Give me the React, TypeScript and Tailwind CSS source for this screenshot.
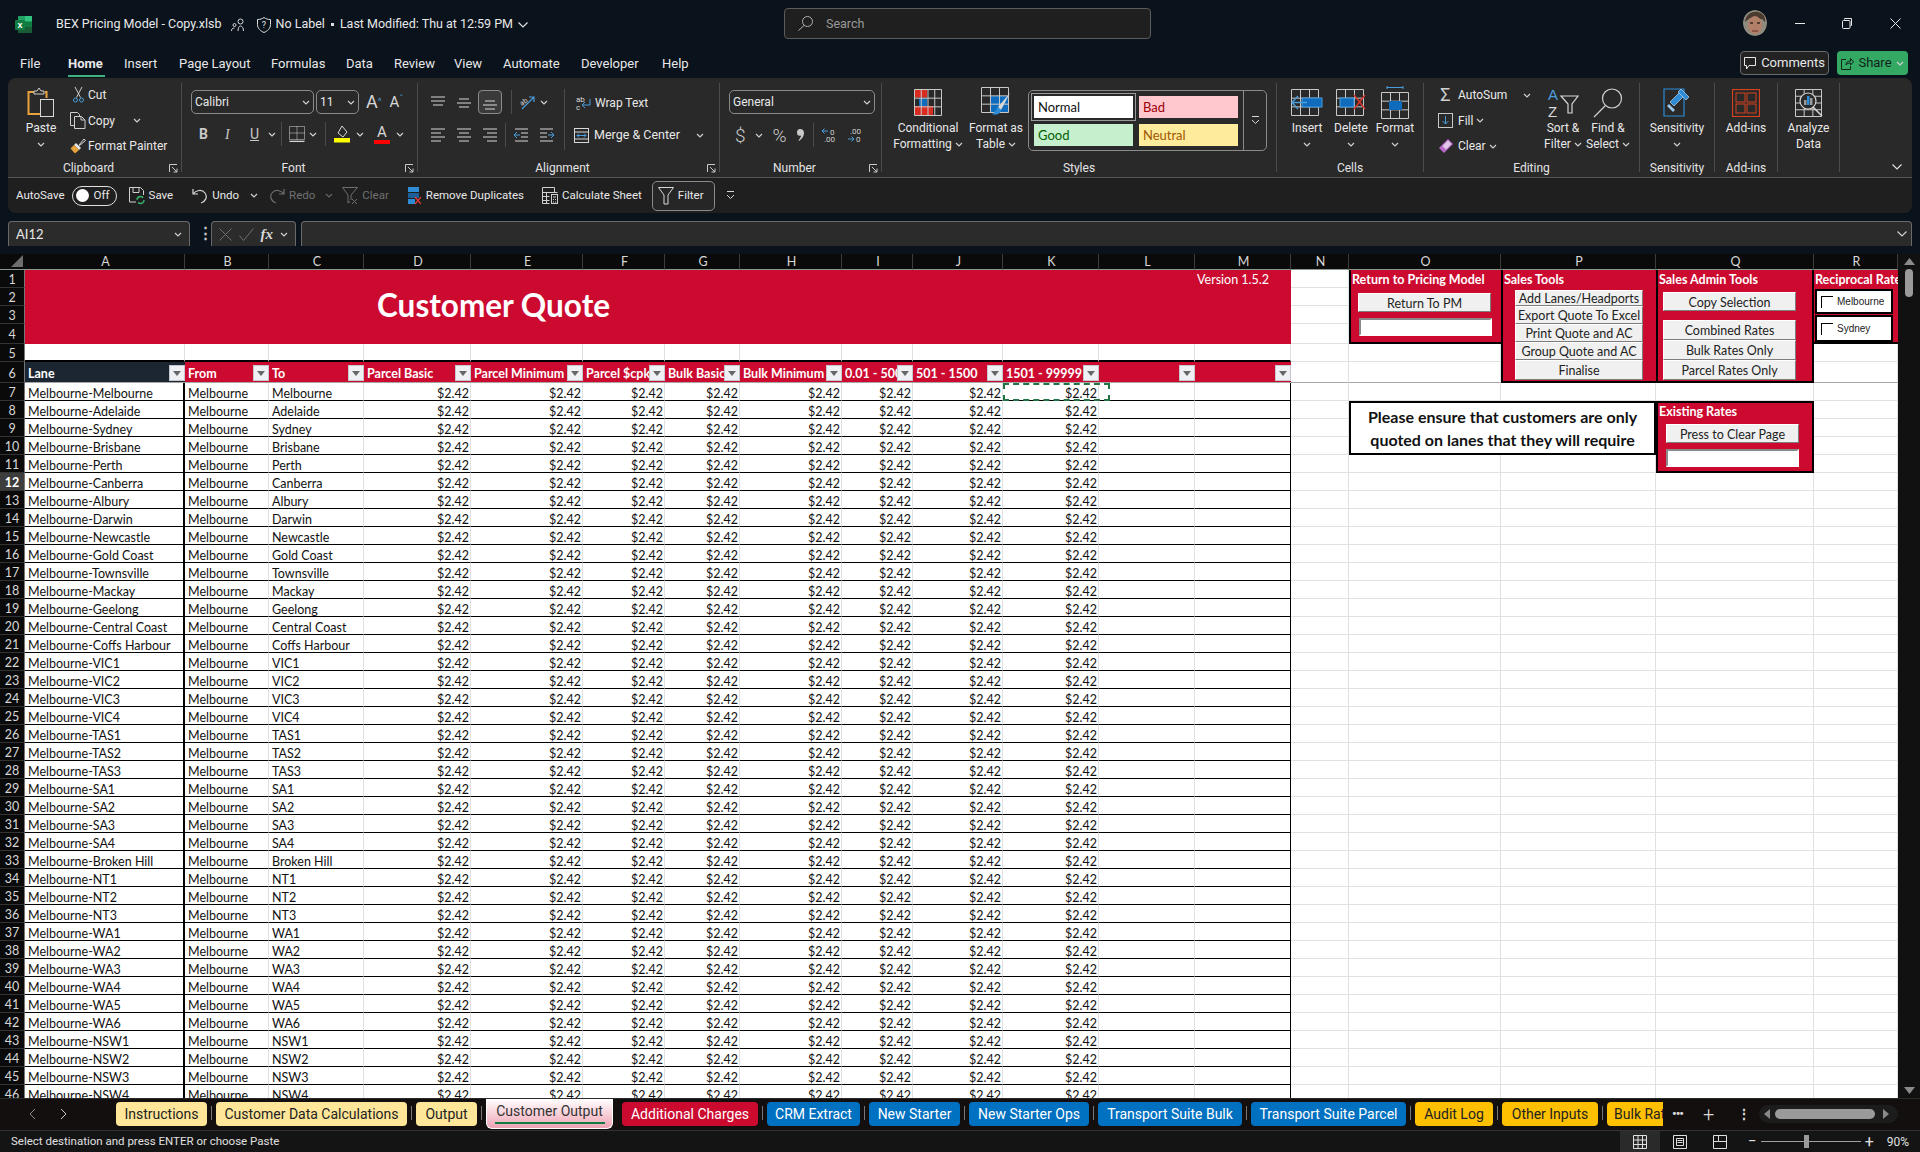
import type { ReactNode } from 'react';

const LANES = [
  'Melbourne', 'Adelaide', 'Sydney', 'Brisbane', 'Perth', 'Canberra', 'Albury', 'Darwin', 'Newcastle', 'Gold Coast',
  'Townsville', 'Mackay', 'Geelong', 'Central Coast', 'Coffs Harbour', 'VIC1', 'VIC2', 'VIC3', 'VIC4', 'TAS1', 'TAS2',
  'TAS3', 'SA1', 'SA2', 'SA3', 'SA4', 'Broken Hill', 'NT1', 'NT2', 'NT3', 'WA1', 'WA2', 'WA3', 'WA4', 'WA5', 'WA6',
  'NSW1', 'NSW2', 'NSW3', 'NSW4',
];
const COLS = 'ABCDEFGHIJKLMNOPQR'.split('');
const HEADERS = ['Lane', 'From', 'To', 'Parcel Basic', 'Parcel Minimum', 'Parcel $cpk', 'Bulk Basic', 'Bulk Minimum', '0.01 - 500', '501 - 1500', '1501 - 99999', '', ''];

// merged ranges on the sheet: [firstCol, lastCol, firstRow, lastRow], col 0 = A
const MERGED = [
  [0, 12, 1, 4],
  [14, 14, 1, 4],
  [15, 15, 1, 6],
  [16, 16, 1, 6],
  [17, 17, 1, 4],
  [14, 15, 8, 10],
  [16, 16, 8, 11],
];
const isMerged = (c: number, r: number) => MERGED.some(([c1, c2, r1, r2]) => c >= c1 && c <= c2 && r >= r1 && r <= r2);

const TABS = [
  { name: 'Instructions', cls: 'w-[91px] bg-[#ffe699] text-[#222]' },
  { name: 'Customer Data Calculations', cls: 'w-[191px] bg-[#ffe699] text-[#222]' },
  { name: 'Output', cls: 'w-[61px] bg-[#ffe699] text-[#222]' },
  { name: 'Customer Output', active: true, cls: 'w-[127px]' },
  { name: 'Additional Charges', cls: 'w-[136px] bg-[#cc0a30] text-white' },
  { name: 'CRM Extract', cls: 'w-[93px] bg-[#0070c0] text-white' },
  { name: 'New Starter', cls: 'w-[91px] bg-[#0070c0] text-white' },
  { name: 'New Starter Ops', cls: 'w-[120px] bg-[#0070c0] text-white' },
  { name: 'Transport Suite Bulk', cls: 'w-[144px] bg-[#0070c0] text-white' },
  { name: 'Transport Suite Parcel', cls: 'w-[155px] bg-[#0070c0] text-white' },
  { name: 'Audit Log', cls: 'w-[78px] bg-[#ffc000] text-[#222]' },
  { name: 'Other Inputs', cls: 'w-[96px] bg-[#ffc000] text-[#222]' },
  { name: 'Bulk Rates', cls: 'w-[80px] bg-[#ffc000] text-[#222]' },
];

function Chev({ className = '', dim = false }: { className?: string; dim?: boolean }) {
  return (
    <svg width="8" height="5" viewBox="0 0 8 5" className={`shrink-0 ${className}`}>
      <path d="M1 1l3 3 3-3" fill="none" stroke={dim ? '#666' : '#d0d0d0'} strokeWidth="1.2" />
    </svg>
  );
}

function Launcher() {
  return (
    <svg width="9" height="9" viewBox="0 0 9 9">
      <path d="M.5 8V.5H8M3 3l5 5M8 4.5V8H4.5" fill="none" stroke="#c8c8c8" strokeWidth="1" />
    </svg>
  );
}

function Lines({ rows }: { rows: number[][] }) {
  return (
    <svg width="16" height="16" viewBox="0 0 16 16">
      {rows.map(([x1, x2, y], i) => (
        <line key={i} x1={x1} x2={x2} y1={y} y2={y} stroke="#d8d8d8" strokeWidth="1" />
      ))}
    </svg>
  );
}

function MiniGrid({ w, h, nx, ny }: { w: number; h: number; nx: number; ny: number }) {
  const xs = Array.from({ length: nx + 1 }, (_, i) => 0.5 + (i * (w - 1)) / nx);
  const ys = Array.from({ length: ny + 1 }, (_, i) => 0.5 + (i * (h - 1)) / ny);
  return (
    <>
      {xs.map((x) => <line key={x} x1={x} x2={x} y1={0.5} y2={h - 0.5} stroke="#c8c8c8" />)}
      {ys.map((y) => <line key={y} x1={0.5} x2={w - 0.5} y1={y} y2={y} stroke="#c8c8c8" />)}
    </>
  );
}

function ExcelLogo() {
  return (
    <svg width="17" height="17" viewBox="0 0 17 17">
      <rect x="3" y="0" width="14" height="17" rx="1" fill="#21a366" />
      <rect x="10" y="0" width="7" height="5.5" fill="#33c481" />
      <rect x="3" y="11" width="14" height="6" fill="#185c37" />
      <rect x="10" y="5.5" width="7" height="5.5" fill="#107c41" />
      <rect x="0" y="4" width="10" height="10" rx="1" fill="#107c41" />
      <text x="5" y="12" textAnchor="middle" fontSize="9" fontWeight="700" fill="#fff" fontFamily="Liberation Sans">x</text>
    </svg>
  );
}

function PasteIcon() {
  return (
    <svg width="28" height="31" viewBox="0 0 28 31">
      <path d="M7 5H1.5v22H13" fill="none" stroke="#e9a33c" strokeWidth="2" />
      <path d="M18 5h1.500v6" fill="none" stroke="#e9a33c" strokeWidth="2" />
      <path d="M7 7V4h3l2-3 2 3h3v3z" fill="none" stroke="#cfcfcf" />
      <rect x="13.500" y="12.500" width="13" height="17" fill="#2a2a2a" stroke="#d8d8d8" />
    </svg>
  );
}

function ScissorsIcon() {
  return (
    <svg width="11" height="16" viewBox="0 0 11 16">
      <path d="M2 0l5.500 10.500M9 0L3.500 10.500" fill="none" stroke="#cfcfcf" />
      <circle cx="2.500" cy="13" r="2" fill="none" stroke="#4a9edb" />
      <circle cx="8.500" cy="13" r="2" fill="none" stroke="#4a9edb" />
    </svg>
  );
}

function CopyIcon() {
  return (
    <svg width="16" height="17" viewBox="0 0 16 17">
      <path d="M4 13.500H.5V.5h7l2 2V5M4.500 4.500h7l3.500 3.500v8.500H4.500z" fill="none" stroke="#cfcfcf" />
      <path d="M11 4.500V8h4" fill="none" stroke="#cfcfcf" />
    </svg>
  );
}

function BrushIcon() {
  return (
    <svg width="16" height="16" viewBox="0 0 16 16">
      <path d="M9 7l5-6 1.500 1.500-6 5z" fill="none" stroke="#d8d8d8" />
      <path d="M6 5l5 5-2 2-5-5z" fill="#e5e5e5" />
      <path d="M4 7l5 5-4 3.500-4.500-5z" fill="#e9a33c" />
    </svg>
  );
}

function ConditionalIcon() {
  return (
    <svg width="29" height="27" viewBox="0 0 29 27">
      <rect x="1" y="0.500" width="12" height="8" fill="#d92b20" />
      <rect x="5" y="9" width="8" height="8" fill="#0f6cbd" />
      <rect x="1" y="17" width="18" height="9" fill="#d92b20" />
      <MiniGrid w={28} h={27} nx={4} ny={3} />
    </svg>
  );
}

function TableIcon() {
  return (
    <svg width="30" height="31" viewBox="0 0 30 31">
      <rect x="10" y="9" width="18" height="16" fill="#0f6cbd" />
      <MiniGrid w={28} h={26} nx={3} ny={3} />
      <path d="M29 6L17 20l3 3z" fill="#d8d8d8" />
      <path d="M17 20c-2 1-2 5-6 7 5 2 9-1 9-4z" fill="#2e8bd6" />
    </svg>
  );
}

function InsertIcon() {
  return (
    <svg width="32" height="27" viewBox="0 0 32 27">
      <MiniGrid w={28} h={27} nx={3} ny={3} />
      <rect x="11" y="9" width="20" height="9" fill="#0f6cbd" stroke="#4a9edb" />
      <path d="M16 13.500H2M7 7l-6 6.500L7 20" fill="none" stroke="#4a9edb" strokeWidth="1.400" />
    </svg>
  );
}

function DeleteIcon() {
  return (
    <svg width="30" height="27" viewBox="0 0 30 27">
      <MiniGrid w={28} h={27} nx={3} ny={3} />
      <rect x="4" y="9" width="14" height="9" fill="#0f6cbd" stroke="#4a9edb" />
      <path d="M18 6l11 14M29 6L18 20" stroke="#d9352c" strokeWidth="1.500" />
    </svg>
  );
}

function FormatIcon() {
  return (
    <svg width="29" height="33" viewBox="0 0 29 33">
      <path d="M6 1.500h16M6 0v3M22 0v3" stroke="#4a9edb" />
      <g transform="translate(0 6)">
        <MiniGrid w={28} h={27} nx={3} ny={3} />
        <rect x="8" y="9" width="13" height="9" fill="#0f6cbd" />
      </g>
    </svg>
  );
}

function SortIcon() {
  return (
    <svg width="31" height="30" viewBox="0 0 31 30" className="overflow-visible">
      <text x="0" y="12" fontSize="15" fill="#4a9edb" fontFamily="Liberation Sans">A</text>
      <text x="0" y="29" fontSize="15" fill="#d8d8d8" fontFamily="Liberation Sans">Z</text>
      <path d="M13 8h17l-6 8v9h-4v-9z" fill="none" stroke="#d8d8d8" strokeWidth="1.200" />
    </svg>
  );
}

function FindIcon() {
  return (
    <svg width="30" height="30" viewBox="0 0 30 30">
      <circle cx="19" cy="10.500" r="9.500" fill="none" stroke="#d0d0d0" strokeWidth="1.200" />
      <path d="M12 18L1 29" stroke="#d0d0d0" strokeWidth="1.200" />
    </svg>
  );
}

function SensitivityIcon() {
  return (
    <svg width="28" height="29" viewBox="0 0 28 29">
      <path d="M1 1h20v27H1z" fill="none" stroke="#2e8bd6" strokeWidth="1.200" />
      <path d="M7 14L18 3l4 4L11 18z" fill="#2e8bd6" stroke="#d8e8f5" strokeWidth=".6" />
      <path d="M18 1l8 8-3 3-8-8z" fill="#2e8bd6" stroke="#d8e8f5" strokeWidth=".6" />
      <path d="M6 16l6 6-2 2-6-6z" fill="#9cc7e8" />
    </svg>
  );
}

function AddinsIcon() {
  return (
    <svg width="28" height="28" viewBox="0 0 28 28" fill="none" stroke="#d8431f">
      <rect x="0.500" y="0.500" width="27" height="27" strokeWidth="1.200" />
      <rect x="4" y="4" width="9" height="9" />
      <rect x="15" y="4" width="9" height="9" />
      <rect x="4" y="15" width="9" height="9" />
      <rect x="15" y="15" width="9" height="9" />
    </svg>
  );
}

function AnalyzeIcon() {
  return (
    <svg width="28" height="28" viewBox="0 0 28 28">
      <MiniGrid w={27} h={28} nx={3} ny={4} />
      <circle cx="13" cy="12" r="8" fill="#2a2a2a" stroke="#d8d8d8" strokeWidth="1.200" />
      <rect x="9" y="11" width="2.500" height="5" fill="#9a9a9a" />
      <rect x="12" y="7" width="2.500" height="9" fill="#2e8bd6" />
      <rect x="15" y="9" width="2.500" height="7" fill="#9a9a9a" />
      <path d="M18 18l9 9" stroke="#d8d8d8" strokeWidth="1.500" />
    </svg>
  );
}

function Group({ width, label, launcher, children }: { width: string; label?: string; launcher?: boolean; children: ReactNode }) {
  return (
    <div className="flex shrink-0 items-start">
      <div className={`flex flex-col ${width}`}>
        <div className="flex h-[76px]">{children}</div>
        <div className={`relative flex h-[18px] items-center justify-center text-[12px] text-[#e4e4e4] ${launcher ? 'pr-[12px]' : ''}`}>
          {label}
          {launcher && (
            <span className="absolute right-[3px] top-[5px] flex">
              <Launcher />
            </span>
          )}
        </div>
      </div>
      <div className="h-[89px] w-px bg-[#4b4b4b]" />
    </div>
  );
}

function BigBtn({ width, icon, line1, line2, chev }: { width: string; icon: ReactNode; line1: string; line2?: string; chev?: boolean }) {
  return (
    <div className={`flex shrink-0 flex-col items-center pt-[2px] text-[12px] leading-[16px] text-[#e8e8e8] ${width}`}>
      <div className="flex h-[35px] items-center justify-center">{icon}</div>
      <div className="whitespace-nowrap">{line1}</div>
      {line2 ? (
        <div className="flex items-center gap-[3px] whitespace-nowrap">
          {line2}
          {chev && <Chev />}
        </div>
      ) : (
        chev && <div className="flex h-[16px] items-center"><Chev /></div>
      )}
    </div>
  );
}

function SmallBtn({ icon, text, iconBox = 'w-[20px]', gap, chev }: { icon: ReactNode; text: string; iconBox?: string; gap?: string; chev?: boolean }) {
  return (
    <div className="flex h-[26px] items-center text-[12px] text-[#e8e8e8]">
      <div className={`flex justify-center ${iconBox}`}>{icon}</div>
      <span className="whitespace-nowrap">{text}</span>
      {chev && <Chev className={gap ?? 'ml-[3px]'} />}
    </div>
  );
}

function Ribbon() {
  return (
    <div className="mx-2 h-[135px] overflow-hidden rounded-lg bg-[#292929]">
      <div className="flex h-[99px] items-start pt-[5px]">
        <Group width="w-[173px]" label="Clipboard" launcher>
          <BigBtn width="w-[60px] ml-[3px]" icon={<PasteIcon />} line1="Paste" chev />
          <div className="-mt-px ml-[-3px] flex flex-col">
            <SmallBtn icon={<ScissorsIcon />} text="Cut" />
            <div className="flex items-center">
              <SmallBtn icon={<CopyIcon />} text="Copy" />
              <Chev className="ml-[18px]" />
            </div>
            <SmallBtn icon={<BrushIcon />} text="Format Painter" />
          </div>
        </Group>

        <Group width="w-[235px]" label="Font" launcher>
          <div className="flex flex-col pl-[9px] pt-[7px]">
            <div className="flex h-[24px] items-center">
              <div className="flex h-[24px] w-[123px] items-center justify-between rounded-[5px] border border-[#8a8a8a] px-[3px] text-[12px] text-[#e8e8e8]">
                Calibri
                <Chev />
              </div>
              <div className="ml-[2px] flex h-[24px] w-[43px] items-center justify-between rounded-[5px] border border-[#8a8a8a] px-[3px] text-[12px] text-[#e8e8e8]">
                11
                <Chev />
              </div>
              <span className="ml-[7px] text-[18px] leading-none text-[#d8d8d8]">A<sup className="text-[9px] text-[#4a9edb]">^</sup></span>
              <span className="ml-[8px] text-[15px] leading-none text-[#d8d8d8]">A<sup className="text-[9px] text-[#4a9edb]">ˇ</sup></span>
            </div>
            <div className="mt-[8px] flex h-[24px] items-center text-[14px] text-[#c8c8c8]">
              <span className="ml-[8px] w-[26px] font-bold">B</span>
              <span className="w-[25px] font-[Liberation_Serif,serif] italic">I</span>
              <span className="w-[15px] underline">U</span>
              <Chev className="ml-[3px]" />
              <div className="ml-[5px] mr-[7px] h-[24px] w-px bg-[#4b4b4b]" />
              <svg width="16" height="16" viewBox="0 0 16 16" fill="none" stroke="#d8d8d8">
                <path d="M.5 15.500h15" strokeWidth="1.500" />
                <path d="M.5.500h15v13H.5zM8 .5v13M.5 7h15" strokeDasharray="1 1" />
              </svg>
              <Chev className="ml-[4px]" />
              <div className="mx-[8px] h-[24px] w-px bg-[#4b4b4b]" />
              <svg width="16" height="18" viewBox="0 0 16 18">
                <path d="M8 1l5 6-4 5-5-4z" fill="none" stroke="#d8d8d8" />
                <rect x="0" y="13" width="16" height="4.500" fill="#ffff00" />
              </svg>
              <Chev className="ml-[6px]" />
              <div className="ml-[10px] flex w-[16px] flex-col items-center">
                <span className="text-[15px] leading-[14px] text-[#d8d8d8]">A</span>
                <span className="mt-[1px] h-[4px] w-[16px] bg-[#ff0000]" />
              </div>
              <Chev className="ml-[6px]" />
            </div>
          </div>
        </Group>

        <Group width="w-[301px]" label="Alignment" launcher>
          <div className="flex flex-col pl-[12px] pt-[7px]">
            <div className="flex h-[24px] items-center gap-[10px]">
              <Lines rows={[[1, 15, 3], [1, 15, 7], [3, 13, 11]]} />
              <Lines rows={[[3, 13, 5], [1, 15, 9], [3, 13, 13]]} />
              <div className="mx-[-4px] flex h-[24px] w-[24px] items-center justify-center rounded-[4px] border border-[#8a8a8a] bg-[#3a3a3a]">
                <Lines rows={[[3, 13, 7], [1, 15, 11], [3, 13, 15]]} />
              </div>
              <div className="ml-[3px] h-[24px] w-px bg-[#4b4b4b]" />
              <svg width="17" height="17" viewBox="0 0 17 17" className="-ml-[3px]">
                <text x="1" y="10" fontSize="7" fill="#d8d8d8" fontFamily="Roboto" transform="rotate(-35 5 8)">ab</text>
                <path d="M3 15L15 3M10 3h5v5" fill="none" stroke="#4a9edb" strokeWidth="1.200" />
              </svg>
              <Chev className="-ml-[6px]" />
            </div>
            <div className="mt-[9px] flex h-[24px] items-center gap-[10px]">
              <Lines rows={[[1, 15, 2], [1, 11, 6], [1, 15, 10], [1, 11, 14]]} />
              <Lines rows={[[1, 15, 2], [3, 13, 6], [1, 15, 10], [3, 13, 14]]} />
              <Lines rows={[[1, 15, 2], [5, 15, 6], [1, 15, 10], [5, 15, 14]]} />
              <div className="ml-[-3px] mr-[-3px] h-[24px] w-px bg-[#4b4b4b]" />
              <svg width="16" height="16" viewBox="0 0 16 16" fill="none">
                <path d="M2 2h13M8 6h7M8 10h7M2 14h13" stroke="#d8d8d8" />
                <path d="M7 8H1M4 5L1 8l3 3" stroke="#4a9edb" />
              </svg>
              <svg width="16" height="16" viewBox="0 0 16 16" fill="none">
                <path d="M1 2h13M1 6h7M1 10h7M1 14h13" stroke="#d8d8d8" />
                <path d="M9 8h6M12 5l3 3-3 3" stroke="#4a9edb" />
              </svg>
            </div>
          </div>
          <div className="ml-[9px] mt-[6px] h-[61px] w-px bg-[#4b4b4b]" />
          <div className="ml-[11px] flex flex-col pt-[7px]">
            <div className="flex h-[24px] items-center pt-[1px] text-[12px] text-[#e8e8e8]">
              <svg width="15" height="17" viewBox="0 0 15 17" className="mr-[4px]">
                <text x="0" y="8" fontSize="8" fill="#d8d8d8" fontFamily="Roboto">ab</text>
                <text x="0" y="16" fontSize="8" fill="#d8d8d8" fontFamily="Roboto">c</text>
                <path d="M14 5v6H6M9 8l-3 3 3 3" fill="none" stroke="#4a9edb" />
              </svg>
              Wrap Text
            </div>
            <div className="mt-[9px] flex h-[24px] items-center text-[12.500px] text-[#e8e8e8]">
              <svg width="15" height="15" viewBox="0 0 15 15" fill="none" className="-ml-[2px] mr-[5px]">
                <rect x=".5" y=".5" width="14" height="14" stroke="#d8d8d8" />
                <path d="M.5 4h14M.5 11h14" stroke="#d8d8d8" />
                <path d="M3 7.500h9M5 5.500l-2 2 2 2M10 5.500l2 2-2 2" stroke="#4a9edb" />
              </svg>
              Merge &amp; Center
              <Chev className="ml-[16px]" />
            </div>
          </div>
        </Group>

        <Group width="w-[161px]" label="Number" launcher>
          <div className="flex flex-col pl-[9px] pt-[7px]">
            <div className="flex h-[24px] w-[146px] items-center justify-between rounded-[5px] border border-[#8a8a8a] px-[3px] text-[12px] text-[#e8e8e8]">
              General
              <Chev />
            </div>
            <div className="mt-[9px] flex h-[24px] items-center text-[#c8c8c8]">
              <span className="ml-[6px] text-[19px] font-light leading-none">$</span>
              <Chev className="ml-[9px]" />
              <span className="ml-[10px] text-[19px] font-light leading-none">%</span>
              <svg width="8" height="14" viewBox="0 0 8 14" className="ml-[9px]">
                <path d="M4 1c2.500 0 4 1.500 4 4 0 3-2 6-5 8l-.5-.8C4 10.500 5 9 5 7.500 2.500 8.500 1 7 1 4.500 1 2.500 2 1 4 1z" fill="#c8c8c8" />
              </svg>
              <div className="ml-[9px] h-[24px] w-px bg-[#4b4b4b]" />
              <svg width="17" height="16" viewBox="0 0 17 16" className="ml-[7px]">
                <path d="M7 4H1M3.500 1.500L1 4l2.500 2.500" fill="none" stroke="#4a9edb" />
                <text x="9" y="8" fontSize="8" fill="#d0d0d0" fontFamily="Roboto">0</text>
                <text x="3" y="15" fontSize="8" fill="#d0d0d0" fontFamily="Roboto">.00</text>
              </svg>
              <svg width="17" height="16" viewBox="0 0 17 16" className="ml-[9px]">
                <text x="3" y="7" fontSize="8" fill="#d0d0d0" fontFamily="Roboto">.00</text>
                <path d="M1 12h6M4.500 9.500L7 12l-2.500 2.500" fill="none" stroke="#4a9edb" />
                <text x="9" y="15" fontSize="8" fill="#d0d0d0" fontFamily="Roboto">0</text>
              </svg>
            </div>
          </div>
        </Group>

        <Group width="w-[394px]" label="Styles">
          <BigBtn width="w-[72px] ml-[10px]" icon={<ConditionalIcon />} line1="Conditional" line2="Formatting" chev />
          <BigBtn width="w-[60px] ml-[2px]" icon={<TableIcon />} line1="Format as" line2="Table" chev />
          <div className="ml-[2px] mt-[7px] flex h-[61px] w-[239px] rounded-[5px] border border-[#8a8a8a]">
            <div className="grid flex-1 grid-cols-2 gap-x-[6px] gap-y-[6px] p-[5px] font-[Lato,sans-serif] text-[13px] leading-[22px]">
              <div className="bg-white pl-[4px] text-[#111] outline outline-[#9a9a9a] outline-offset-[2px]">Normal</div>
              <div className="bg-[#ffc7ce] pl-[4px] text-[#9c0006]">Bad</div>
              <div className="bg-[#c6efce] pl-[4px] text-[#006100]">Good</div>
              <div className="bg-[#ffeb9c] pl-[4px] text-[#9c5700]">Neutral</div>
            </div>
            <div className="flex w-[23px] shrink-0 items-center justify-center border-l border-[#8a8a8a]">
              <svg width="9" height="9" viewBox="0 0 9 9" fill="none" stroke="#d8d8d8">
                <path d="M1 .5h7M1 4l3.500 3.500L8 4" />
              </svg>
            </div>
          </div>
        </Group>

        <Group width="w-[146px]" label="Cells">
          <BigBtn width="w-[44px] ml-[8px]" icon={<InsertIcon />} line1="Insert" chev />
          <BigBtn width="w-[44px]" icon={<DeleteIcon />} line1="Delete" chev />
          <BigBtn width="w-[44px]" icon={<FormatIcon />} line1="Format" chev />
        </Group>

        <Group width="w-[215px]" label="Editing">
          <div className="-mt-px ml-[10px] flex w-[108px] flex-col">
            <div className="flex items-center">
              <SmallBtn
                iconBox="w-[25px] -ml-[1px] text-[18px] text-[#d0d0d0]"
                icon={<span className="leading-none">Σ</span>}
                text="AutoSum"
              />
              <Chev className="ml-[16px]" />
            </div>
            <SmallBtn
              iconBox="w-[25px] -ml-[1px]"
              icon={
                <svg width="15" height="15" viewBox="0 0 15 15" fill="none">
                  <rect x=".5" y=".5" width="14" height="14" stroke="#c8c8c8" />
                  <path d="M7.500 3v8M4.500 8l3 3 3-3" stroke="#4a9edb" />
                </svg>
              }
              text="Fill"
              chev
            />
            <SmallBtn
              iconBox="w-[25px] -ml-[1px]"
              icon={
                <svg width="16" height="16" viewBox="0 0 16 16">
                  <path d="M10 1l5 5-9 9-5-5z" fill="#b86bc9" />
                  <path d="M10 2.500L13.500 6 8 11.500 4.500 8z" fill="#e4c8ea" />
                </svg>
              }
              text="Clear"
              chev
            />
          </div>
          <BigBtn width="w-[46px] -ml-[2px]" icon={<SortIcon />} line1="Sort &" line2="Filter" chev />
          <BigBtn width="w-[46px] -ml-[1px]" icon={<FindIcon />} line1="Find &" line2="Select" chev />
        </Group>

        <Group width="w-[74px]" label="Sensitivity">
          <BigBtn width="w-full" icon={<SensitivityIcon />} line1="Sensitivity" chev />
        </Group>
        <Group width="w-[62px]" label="Add-ins">
          <BigBtn width="w-full" icon={<AddinsIcon />} line1="Add-ins" />
        </Group>
        <Group width="w-[61px]">
          <BigBtn width="w-full" icon={<AnalyzeIcon />} line1="Analyze" line2="Data" />
        </Group>
        <div className="flex h-[87px] flex-1 items-end justify-end pr-[10px]">
          <svg width="10" height="6" viewBox="0 0 10 6">
            <path d="M.5.500L5 5 9.500.5" fill="none" stroke="#e0e0e0" strokeWidth="1.200" />
          </svg>
        </div>
      </div>

      <div className="flex h-[36px] items-center border-t border-[#555] bg-[#1f1f1f] pl-[8px] text-[11.500px] text-[#e8e8e8]">
        <span>AutoSave</span>
        <div className="ml-[7px] flex h-[20px] w-[45px] items-center rounded-full border border-[#e0e0e0] pl-[3px]">
          <span className="h-[13px] w-[13px] rounded-full bg-white" />
          <span className="ml-[5px]">Off</span>
        </div>
        <svg width="16" height="18" viewBox="0 0 16 18" fill="none" className="ml-[12px]">
          <path d="M7 15H.5V.5h11l3 3V8" stroke="#d0d0d0" />
          <path d="M4 .5v5h6v-5" stroke="#d0d0d0" />
          <circle cx="11.500" cy="13" r="3.500" stroke="#38b36b" strokeWidth="1.500" strokeDasharray="8 3" />
        </svg>
        <span className="ml-[4px]">Save</span>
        <svg width="15" height="17" viewBox="0 0 15 17" fill="none" className="ml-[19px]" stroke="#d8d8d8" strokeWidth="1.200">
          <path d="M1 2v5h5M1 7c3-4 9-5 12-1s0 9-4 10" />
        </svg>
        <span className="ml-[5px]">Undo</span>
        <Chev className="ml-[11px]" />
        <svg width="15" height="17" viewBox="0 0 15 17" fill="none" className="ml-[12px]" stroke="#6f6f6f" strokeWidth="1.200">
          <path d="M14 2v5H9M14 7C11 3 5 2 2 6s0 9 4 10" />
        </svg>
        <span className="ml-[4px] text-[#6f6f6f]">Redo</span>
        <Chev dim className="ml-[10px]" />
        <svg width="16" height="17" viewBox="0 0 16 17" fill="none" className="ml-[9px]" stroke="#6f6f6f">
          <path d="M.5.500h15L9 8v5M.5.500L6 8v8l2-1.500M10 12l5 5M15 12l-5 5" />
        </svg>
        <span className="ml-[4px] text-[#6f6f6f]">Clear</span>
        <svg width="13" height="18" viewBox="0 0 13 18" className="ml-[19px]">
          <rect x="0" y="0" width="11" height="5" fill="#2e8bd6" />
          <rect x="0" y="6" width="11" height="5" fill="#1d5f99" />
          <rect x="0" y="12" width="7" height="5" fill="#2e8bd6" />
          <path d="M7 10l6 7M13 10l-6 7" stroke="#e0392f" strokeWidth="1.300" />
        </svg>
        <span className="ml-[5px]">Remove Duplicates</span>
        <svg width="16" height="18" viewBox="0 0 16 18" fill="none" className="ml-[18px]" stroke="#d0d0d0">
          <path d="M.5.500h12v5M.5 5.500h15M.5 9.500h7M.5 13.500h7M4.500 5.500v11M.5.500v16h7" />
          <rect x="9.500" y="7.500" width="6" height="9" />
          <path d="M11 10h3M11 12.500h1M13 12.500h1M11 15h1M13 15h1" />
        </svg>
        <span className="ml-[4px]">Calculate Sheet</span>
        <div className="ml-[10px] flex h-[30px] w-[63px] items-center rounded-[5px] border border-[#8a8a8a] bg-[#262626] pl-[5px]">
          <svg width="16" height="18" viewBox="0 0 16 18" fill="none" stroke="#d8d8d8">
            <path d="M.5.500h15L10 8v9H6V8z" />
          </svg>
          <span className="ml-[4px]">Filter</span>
        </div>
        <svg width="9" height="9" viewBox="0 0 9 9" fill="none" stroke="#d8d8d8" className="ml-[11px]">
          <path d="M1 .5h7M1 4l3.500 3.500L8 4" />
        </svg>
      </div>
    </div>
  );
}

function PanelButton({ label, className }: { label: string; className: string }) {
  return (
    <div
      className={`flex items-center justify-center whitespace-nowrap border-t border-l border-t-white border-l-white border-b border-r border-b-[#7d7d7d] border-r-[#7d7d7d] bg-[#f0f0f0] pt-[3px] text-[12.500px] text-[#222] ${className}`}
    >
      {label}
    </div>
  );
}

function Panel({ title, className, children }: { title: string; className: string; children: ReactNode }) {
  return (
    <div className={`flex flex-col overflow-hidden border-x-2 border-b-2 border-black bg-[#cc0a30] ${className}`}>
      <div className="h-[19px] whitespace-nowrap pl-[1px] text-[12.500px] font-bold leading-[20px] text-white">{title}</div>
      {children}
    </div>
  );
}

function ReciprocalCheck({ label, className }: { label: string; className: string }) {
  return (
    <div className={`ml-[1px] flex w-[78px] items-center border-2 border-black bg-white pl-[4px] font-[Liberation_Sans,sans-serif] text-[10px] text-[#222] ${className}`}>
      <span className="mr-[4px] h-[12px] w-[12px] border-l border-t border-black" />
      {label}
    </div>
  );
}

function FilterBtn() {
  return (
    <span className="mb-[1px] flex h-[16px] w-[16px] shrink-0 items-center justify-center self-end border border-[#c4c8ce] bg-[#eef0f3]">
      <svg width="8" height="5" viewBox="0 0 8 5">
        <path d="M0 0h8L4 5z" fill="#666" />
      </svg>
    </span>
  );
}

function SheetCell({ c, r }: { c: number; r: number }) {
  const inTable = c <= 12;
  const base = 'bg-white border-r border-b border-r-[#e1e1e1] border-b-[#e1e1e1]';
  if (r === 6 && inTable) {
    const bg = c === 0 ? 'bg-[#1b2632]' : 'bg-[#cc0a30]';
    return (
      <div className={`flex items-center border-b border-b-[#a6a6a6] pl-[3px] ${bg}`}>
        <span className="min-w-0 flex-1 overflow-hidden whitespace-nowrap pt-[5px] text-[12.500px] font-bold text-white">{HEADERS[c]}</span>
        <FilterBtn />
      </div>
    );
  }
  if (r === 6) return <div className="border-r border-b border-r-[#e1e1e1] border-b-[#a6a6a6] bg-white" />;
  if (r === 5 && inTable) return <div className="border-r border-b-2 border-r-[#e1e1e1] border-b-black bg-white" />;
  if (r >= 7 && inTable) {
    const lane = LANES[r - 7];
    let text: ReactNode = null;
    if (c === 0) text = `Melbourne-${lane}`;
    if (c === 1) text = 'Melbourne';
    if (c === 2) text = lane;
    if (c >= 3 && c <= 10) text = '$2.42';
    const edge = c === 0 ? 'border-r-2 border-r-black' : c === 12 ? 'border-r border-r-black' : 'border-r border-r-[#e1e1e1]';
    return (
      <div
        className={`relative overflow-visible whitespace-nowrap border-b border-b-black bg-white text-[12.500px] leading-[22px] text-[#111] ${edge} ${
          c >= 3 && c <= 10 ? 'pr-[1px] text-right' : 'pl-[3px]'
        }`}
      >
        {text}
        {c === 10 && r === 7 && <span className="absolute -bottom-px -top-0 left-0 -right-[12px] z-10 border-2 border-dashed border-[#217346]" />}
      </div>
    );
  }
  return <div className={base} />;
}

function Sheet() {
  const rows = Array.from({ length: 46 }, (_, i) => i + 1);
  return (
    <div className="flex h-[844px]">
      <div className="grid w-[1898px] grid-cols-[25px_160px_84px_95px_107px_112px_82px_75px_102px_71px_90px_96px_96px_96px_58px_152px_155px_158px_84px] grid-rows-[16px_18px_18px_18px_20px_18px_21px_repeat(40,18px)] overflow-hidden font-[Lato,sans-serif]">
        {/* merged ranges go in first, auto-placed cells fill round them */}
        <div className="relative col-[2/15] row-[2/6] bg-[#cc0a30] font-bold text-white">
          <div className="pl-[352px] pt-[16px] text-[31.500px] leading-[38px]">Customer Quote</div>
          <div className="absolute right-[22px] top-[1px] text-[12.500px] font-normal">Version 1.5.2</div>
        </div>
        <Panel title="Return to Pricing Model" className="col-[16/17] row-[2/6] border-r-0">
          <PanelButton label="Return To PM" className="ml-[7px] mt-[4px] h-[19px] w-[133px]" />
          <div className="ml-[8px] mt-[6px] h-[18px] w-[133px] border-2 border-[#8a8a8a] border-b-white border-r-white bg-white" />
        </Panel>
        <Panel title="Sales Tools" className="col-[17/18] row-[2/8] border-r-0">
          <div className="ml-[12px] mt-[1px] flex w-[128px] flex-col">
            <PanelButton label="Add Lanes/Headports" className="h-[16px]" />
            <PanelButton label="Export Quote To Excel" className="h-[18px]" />
            <PanelButton label="Print Quote and AC" className="h-[18px]" />
            <PanelButton label="Group Quote and AC" className="h-[18px]" />
            <PanelButton label="Finalise" className="h-[20px]" />
          </div>
        </Panel>
        <Panel title="Sales Admin Tools" className="col-[18/19] row-[2/8]">
          <PanelButton label="Copy Selection" className="ml-[5px] mt-[3px] h-[19px] w-[133px]" />
          <div className="ml-[5px] mt-[9px] flex w-[133px] flex-col">
            <PanelButton label="Combined Rates" className="h-[20px]" />
            <PanelButton label="Bulk Rates Only" className="h-[20px]" />
            <PanelButton label="Parcel Rates Only" className="h-[20px]" />
          </div>
        </Panel>
        <Panel title="Reciprocal Rates" className="col-[19/20] row-[2/6] border-l-0 border-r-0">
          <ReciprocalCheck label="Melbourne" className="h-[25px]" />
          <ReciprocalCheck label="Sydney" className="mt-[1px] h-[27px]" />
        </Panel>
        <div className="col-[16/18] row-[9/12] flex flex-col items-center justify-center border-2 border-black bg-white text-[16px] font-bold leading-[23px] text-[#111]">
          <div>Please ensure that customers are only</div>
          <div>quoted on lanes that they will require</div>
        </div>
        <div className="col-[18/19] row-[9/13] flex flex-col border-2 border-black bg-[#cc0a30]">
          <div className="h-[20px] whitespace-nowrap pl-[1px] text-[12.500px] font-bold leading-[18px] text-white">Existing Rates</div>
          <PanelButton label="Press to Clear Page" className="ml-[8px] mt-[1px] h-[19px] w-[133px]" />
          <div className="ml-[8px] mt-[6px] h-[18px] w-[133px] border-2 border-[#8a8a8a] border-b-white border-r-white bg-white" />
        </div>

        <div className="flex items-end justify-end border-b border-b-[#8a9a90] bg-[#0a0a0a] p-[2px]">
          <svg width="12" height="12" viewBox="0 0 12 12">
            <path d="M12 0v12H0z" fill="#6e6e6e" />
          </svg>
        </div>
        {COLS.map((name) => (
          <div key={name} className="flex items-center justify-center border-r border-b border-r-[#3c3c3c] border-b-[#8a9a90] bg-[#0a0a0a] pl-[2px] pt-[1px] text-[12.500px] text-[#d8d8d8]">
            {name}
          </div>
        ))}
        {rows.flatMap((r) => [
          <div
            key={`h${r}`}
            className={`flex items-center justify-center border-b border-r border-b-[#333] border-r-[#777] pt-[4px] text-[12.500px] text-[#d8d8d8] ${
              r === 12 ? 'bg-[#3d3d3d] font-bold text-white' : 'bg-[#0a0a0a]'
            }`}
          >
            {r}
          </div>,
          ...COLS.map((_, c) => (isMerged(c, r) ? null : <SheetCell key={`${c}-${r}`} c={c} r={r} />)),
        ])}
      </div>
      <div className="flex w-[22px] flex-col items-center justify-between bg-[#111] py-[4px]">
        <div className="flex flex-col items-center">
          <svg width="11" height="7" viewBox="0 0 11 7">
            <path d="M5.500 0L11 7H0z" fill="#8a8a8a" />
          </svg>
          <div className="mt-[4px] h-[28px] w-[8px] rounded-full bg-[#9a9a9a]" />
        </div>
        <svg width="11" height="7" viewBox="0 0 11 7">
          <path d="M5.500 7L11 0H0z" fill="#8a8a8a" />
        </svg>
      </div>
    </div>
  );
}

function TabBar() {
  return (
    <div className="flex h-[32px] border-t border-[#2a2a2a] bg-[#140f0f] text-[14px]">
      <div className="flex w-[116px] shrink-0 items-center gap-[24px] pb-[2px] pl-[28px]">
        <svg width="8" height="12" viewBox="0 0 8 12" fill="none" stroke="#8a8a8a"><path d="M7 1L2 6l5 5" /></svg>
        <svg width="8" height="12" viewBox="0 0 8 12" fill="none" stroke="#c8c8c8"><path d="M1 1l5 5-5 5" /></svg>
      </div>
      <div className="flex w-[1547px] shrink-0 items-start overflow-hidden">
        {TABS.map((t, i) => (
          <div key={t.name} className="flex shrink-0 items-start">
            {i > 0 && <div className={`mx-[4px] mt-[7px] h-[14px] w-px ${TABS[i - 1].active ? 'bg-[#140f0f]' : 'bg-[#777]'}`} />}
            {t.active ? (
              <div className={`flex h-[30px] flex-col items-center rounded-b-md border-x border-b border-white bg-linear-to-b from-white to-[#eda3b4] pt-[3px] text-[#333] ${t.cls}`}>
                <span className="leading-[19px]">{t.name}</span>
                <span className="mt-[1px] h-[2px] w-[110px] bg-[#107c41]" />
              </div>
            ) : (
              <div className={`mt-[3px] h-[24px] overflow-hidden whitespace-nowrap rounded-[4px] text-center leading-[24px] ${t.cls}`}>{t.name}</div>
            )}
          </div>
        ))}
      </div>
      <div className="flex flex-1 items-center pb-[2px] text-[#d8d8d8]">
        <span className="ml-[9px] text-[13px] font-bold leading-none tracking-[-1px]">•••</span>
        <span className="ml-[20px] text-[20px] font-light leading-none">+</span>
        <span className="ml-[23px] text-[14px] font-bold leading-none">⋮</span>
        <div className="ml-[8px] flex h-[18px] w-[139px] items-center rounded-full bg-[#1c1c1c] px-[5px]">
          <svg width="6" height="10" viewBox="0 0 6 10"><path d="M6 0v10L0 5z" fill="#8a8a8a" /></svg>
          <div className="ml-[5px] h-[10px] w-[100px] rounded-full bg-[#9a9a9a]" />
          <svg width="6" height="10" viewBox="0 0 6 10" className="ml-[8px]"><path d="M0 0v10l6-5z" fill="#8a8a8a" /></svg>
        </div>
      </div>
    </div>
  );
}

function StatusBar() {
  return (
    <div className="flex h-[22px] items-center justify-between border-t border-[#333] bg-[#141414] pl-[11px] text-[11.500px] text-[#e0e0e0]">
      <span>Select destination and press ENTER or choose Paste</span>
      <div className="flex h-full items-center">
        <div className="flex h-full w-[40px] items-center justify-center bg-[#2a2a2a]">
          <svg width="14" height="14" viewBox="0 0 14 14" fill="none" stroke="#e0e0e0"><path d="M.5.500h13v13H.5zM5 .5v13M9.500.5v13M.5 5h13M.5 9.500h13" /></svg>
        </div>
        <svg width="14" height="14" viewBox="0 0 14 14" fill="none" stroke="#e0e0e0" className="ml-[13px]"><path d="M.5.500h13v13H.5zM3.500 3.500h7v7h-7zM4.500 5.500h5M4.500 7.500h5" /></svg>
        <svg width="14" height="14" viewBox="0 0 14 14" fill="none" stroke="#e0e0e0" className="ml-[26px]"><path d="M.5.500h13v13H.5zM5.500.5v6h-5M5.500 6.500h8" /></svg>
        <span className="ml-[21px] text-[15px] leading-none">−</span>
        <div className="relative ml-[4px] h-px w-[100px] bg-[#a0a0a0]">
          <span className="absolute -top-[6px] left-[43px] h-[13px] w-[5px] bg-[#9a9a9a]" />
        </div>
        <span className="ml-[4px] text-[16px] leading-none">+</span>
        <span className="ml-[13px] mr-[11px] text-[12px]">90%</span>
      </div>
    </div>
  );
}

export default function App() {
  const menu = ['File', 'Home', 'Insert', 'Page Layout', 'Formulas', 'Data', 'Review', 'View', 'Automate', 'Developer', 'Help'];
  const menuGap = ['w-[48px]', 'w-[56px]', 'w-[55px]', 'w-[92px]', 'w-[75px]', 'w-[48px]', 'w-[60px]', 'w-[49px]', 'w-[78px]', 'w-[81px]', 'w-[60px]'];
  return (
    <div className="flex h-[1152px] w-[1920px] flex-col overflow-hidden bg-[#0a121c] font-[Roboto,sans-serif]">
      {/* title bar */}
      <div className="flex h-[46px] items-center text-[12.500px] text-[#e8e8e8]">
        <div className="flex w-[784px] shrink-0 items-center pl-[15px] pt-[3px]">
          <ExcelLogo />
          <span className="ml-[24px]">BEX Pricing Model - Copy.xlsb</span>
          <svg width="14" height="14" viewBox="0 0 14 14" fill="none" stroke="#d8d8d8" className="ml-[9px]">
            <circle cx="9.500" cy="3.500" r="2.500" />
            <path d="M7 13c0-3 1-5 2.500-5s3 2 3 5" />
            <circle cx="3.500" cy="7" r="1.500" />
            <path d="M.5 13c0-2 1-3 3-3" />
          </svg>
          <svg width="14" height="16" viewBox="0 0 14 16" fill="none" stroke="#e0e0e0" className="ml-[12px]">
            <path d="M7 .5c2 1.500 4 2 6.500 2v5c0 4-3 6.500-6.500 8-3.500-1.500-6.500-4-6.500-8v-5C3 2.500 5 2 7 .5z" />
            <text x="7" y="11" textAnchor="middle" fontSize="9" fill="#e0e0e0" stroke="none">?</text>
          </svg>
          <span className="ml-[5px]">No Label</span>
          <span className="mx-[6px] h-[3px] w-[3px] bg-[#e0e0e0]" />
          <span>Last Modified: Thu at 12:59 PM</span>
          <svg width="10" height="6" viewBox="0 0 10 6" className="ml-[5px]"><path d="M.5.500L5 5 9.500.5" fill="none" stroke="#e0e0e0" strokeWidth="1.200" /></svg>
        </div>
        <div className="flex h-[31px] w-[367px] shrink-0 items-center rounded-[4px] border border-[#5c5c5c] bg-[#1f1f1f] pl-[13px] text-[#9a9a9a]">
          <svg width="15" height="15" viewBox="0 0 15 15" fill="none" stroke="#b0b0b0">
            <circle cx="9.500" cy="5.500" r="5" />
            <path d="M6 9.500L.5 14.500" />
          </svg>
          <span className="ml-[13px] pt-[2px]">Search</span>
        </div>
        <div className="flex flex-1 items-center justify-end">
          <svg width="24" height="26" viewBox="0 0 24 26" className="mr-[28px] rounded-full">
            <ellipse cx="12" cy="13" rx="12" ry="13" fill="#8f8a7e" />
            <path d="M2 12C3 3 10 1 15 2s8 5 7 10l-3-3c-4 0-9 0-12-1z" fill="#4b3a2e" />
            <ellipse cx="12" cy="15" rx="7" ry="9" fill="#b27f68" />
            <path d="M7 13h3M14 13h3" stroke="#3a2a22" strokeWidth="1.500" />
            <path d="M9 21h6" stroke="#7a4a3a" strokeWidth="1.500" />
          </svg>
          <svg width="10" height="1" viewBox="0 0 10 1" className="mr-[37px]"><rect width="10" height="1" fill="#e8e8e8" /></svg>
          <svg width="10" height="11" viewBox="0 0 10 11" fill="none" stroke="#e8e8e8" className="mr-[38px]">
            <path d="M2.500 1.500v-1H9.500v7H8.500" />
            <rect x=".5" y="2.500" width="7.500" height="8" rx="1" />
          </svg>
          <svg width="11" height="11" viewBox="0 0 11 11" stroke="#e8e8e8" className="mr-[19px]"><path d="M.5.500l10 10M10.500.5l-10 10" /></svg>
        </div>
      </div>

      {/* menu tabs */}
      <div className="flex h-[32px] items-center pl-[20px] text-[13px] text-[#e8e8e8]">
        {menu.map((m, i) => (
          <span key={m} className={`relative shrink-0 pt-[3px] ${menuGap[i]} ${m === 'Home' ? 'font-bold' : ''}`}>
            {m}
            {m === 'Home' && <span className="absolute -bottom-[4px] left-0 h-[2px] w-[37px] bg-[#3fb27f]" />}
          </span>
        ))}
        <div className="ml-auto mt-[2px] flex items-center gap-[8px] pr-[12px]">
          <div className="flex h-[24px] w-[89px] items-center justify-center gap-[5px] rounded-[4px] border border-[#6a6a6a] bg-[#222]">
            <svg width="12" height="13" viewBox="0 0 12 13" fill="none" stroke="#e8e8e8"><path d="M.5.500h11v8H5L2.500 12V8.500h-2z" /></svg>
            Comments
          </div>
          <div className="flex h-[24px] w-[71px] items-center justify-center gap-[4px] rounded-[4px] bg-[#33a963] text-[#10241a]">
            <svg width="13" height="13" viewBox="0 0 13 13" fill="none" stroke="#10241a"><path d="M5 2.500H.5v10h9V9M5 8c0-3 2-4 4.500-4V1.500l3 3.500-3 3V6c-2 0-3.500.5-4.500 2z" /></svg>
            Share
            <Chev />
          </div>
        </div>
      </div>

      <Ribbon />

      {/* formula bar */}
      <div className="mx-2 mt-2 flex h-[25px] items-center text-[#e8e8e8]">
        <div className="flex h-full w-[182px] items-center justify-between rounded-t-[4px] border-t border-x border-[#6a6a6a] bg-[#2b2b2b] px-[7px] pt-[1px] font-[Lato,sans-serif] text-[13px]">
          AI12
          <Chev />
        </div>
        <span className="ml-[8px] w-[6px] text-center text-[15px] font-bold leading-none text-[#c8c8c8]">⋮</span>
        <div className="ml-[7px] flex h-full w-[85px] items-center justify-around rounded-t-[4px] border-t border-x border-[#6a6a6a] bg-[#2b2b2b] px-[4px]">
          <svg width="13" height="13" viewBox="0 0 13 13" stroke="#6f6f6f"><path d="M.5.500l12 12M12.500.5l-12 12" /></svg>
          <svg width="15" height="13" viewBox="0 0 15 13" fill="none" stroke="#6f6f6f"><path d="M.5 7.500l4 5 10-12" /></svg>
          <span className="font-[Liberation_Serif,serif] text-[15px] font-bold italic text-[#d8d8d8]">fx</span>
          <Chev />
        </div>
        <div className="ml-[5px] flex h-full flex-1 items-center justify-end rounded-t-[4px] border-t border-x border-[#6a6a6a] bg-[#2b2b2b] pr-[4px]">
          <svg width="10" height="6" viewBox="0 0 10 6"><path d="M.5.500L5 5 9.500.5" fill="none" stroke="#d0d0d0" strokeWidth="1.200" /></svg>
        </div>
      </div>

      <div className="h-2 shrink-0" />
      <Sheet />
      <TabBar />
      <StatusBar />
    </div>
  );
}
